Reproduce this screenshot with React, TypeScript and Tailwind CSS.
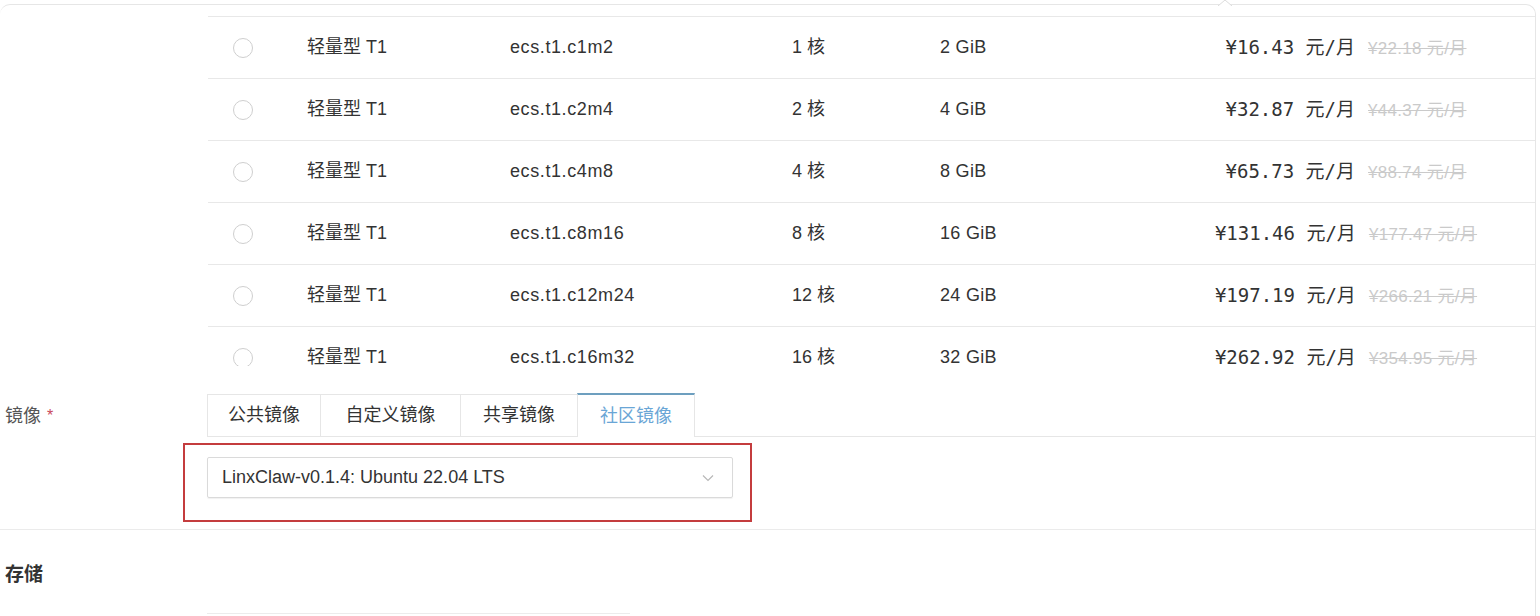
import React from "react";

const rows = [
  { spec: "ecs.t1.c1m2", cores: "1 核", mem: "2 GiB", price: "¥16.43", old: "¥22.18 元/月" },
  { spec: "ecs.t1.c2m4", cores: "2 核", mem: "4 GiB", price: "¥32.87", old: "¥44.37 元/月" },
  { spec: "ecs.t1.c4m8", cores: "4 核", mem: "8 GiB", price: "¥65.73", old: "¥88.74 元/月" },
  { spec: "ecs.t1.c8m16", cores: "8 核", mem: "16 GiB", price: "¥131.46", old: "¥177.47 元/月" },
  { spec: "ecs.t1.c12m24", cores: "12 核", mem: "24 GiB", price: "¥197.19", old: "¥266.21 元/月" },
  { spec: "ecs.t1.c16m32", cores: "16 核", mem: "32 GiB", price: "¥262.92", old: "¥354.95 元/月" },
];

const tabs = [
  { label: "公共镜像", w: "w-[114px]" },
  { label: "自定义镜像", w: "w-[141px]" },
  { label: "共享镜像", w: "w-[118px]" },
];

export default function App() {
  return (
    <div
      className="relative h-[616px] w-[1540px] overflow-hidden bg-white text-[#333]"
      style={{ fontFamily: '"Liberation Sans", "Noto Sans CJK SC", sans-serif' }}
    >
      {/* popover arrow notch */}
      <svg className="absolute left-[1216px] top-0" width="18" height="6" viewBox="0 0 18 6">
        <path d="M2 6 L9 0 L16 6" fill="white" stroke="#dcdcdc" strokeWidth="1" />
      </svg>

      <div className="mt-[4px] mr-[4px] rounded-t-[10px] border-t border-r border-[#e6e6e6]">
        {/* instance table */}
        <div className="pt-[11px] pl-[208px]">
          <div className="h-[350px] overflow-hidden">
            {rows.map((r, i) => (
              <div
                key={i}
                className="grid h-[62px] grid-cols-[99px_203px_282px_148px_250px_1fr] items-center border-t border-[#e8e8e8] text-[18px]"
              >
                <div className="pl-[25px]">
                  <div className="h-[20px] w-[20px] rounded-full border border-[#cfcfcf] bg-white" />
                </div>
                <div>轻量型 T1</div>
                <div className="tracking-[0.6px]">{r.spec}</div>
                <div>{r.cores}</div>
                <div className="tracking-[0.3px]">{r.mem}</div>
                <div className="flex items-baseline justify-center pr-[33px]">
                  <span
                    className="text-[19px] text-[#333]"
                    style={{ fontFamily: '"DejaVu Sans Mono", "Noto Sans CJK SC", monospace' }}
                  >
                    {r.price} 元/月
                  </span>
                  <span className="ml-[13px] text-[17px] tracking-[0.3px] text-[#cacaca] line-through">{r.old}</span>
                </div>
              </div>
            ))}
          </div>
        </div>

        {/* image section */}
        <div className="mt-[27px] border-b border-[#ebebeb] pb-[7px]">
          <div className="flex">
            <div className="flex w-[207px] items-center pl-[5px] pt-[2px] text-[18px] text-[#555]">
              镜像<span className="ml-[6px] text-[16px] text-[#c9485b]">*</span>
            </div>
            <div className="flex flex-1 items-end border-b border-[#e6e6e6]">
              {tabs.map((t) => (
                <div
                  key={t.label}
                  className={`${t.w} -mr-px flex h-[42px] items-center justify-center border border-b-0 border-[#e6e6e6] bg-white text-[18px] text-[#333]`}
                >
                  {t.label}
                </div>
              ))}
              <div className="relative -mb-px flex h-[44px] w-[118px] items-center justify-center border-x border-t-2 border-x-[#e6e6e6] border-t-[#6d9fbf] bg-white text-[18px] text-[#6aa6d6]">
                社区镜像
              </div>
            </div>
          </div>

          <div className="ml-[183px] mt-[6px] h-[79px] w-[569px] border-2 border-[#c43c3e] pl-[22px] pt-[12px]">
            <div className="flex h-[41px] w-[526px] items-center justify-between rounded-[2px] border border-[#dadada] pl-[14px] pr-[18px] shadow-[0_1px_1px_rgba(0,0,0,0.06)]">
              <span className="text-[18px] text-[#333]">LinxClaw-v0.1.4: Ubuntu 22.04 LTS</span>
              <svg width="12" height="8" viewBox="0 0 12 8">
                <path d="M1 1.5 L6 6.5 L11 1.5" fill="none" stroke="#b8b8b8" strokeWidth="1.2" />
              </svg>
            </div>
          </div>
        </div>

        {/* storage */}
        <div className="h-[83px] pl-[5px] pt-[33px] text-[19px] font-bold leading-[24px] text-[#333]">
          存储
        </div>
        <div className="ml-[207px] h-[20px] w-[423px] border-t border-[#ececec]" />
      </div>
    </div>
  );
}
